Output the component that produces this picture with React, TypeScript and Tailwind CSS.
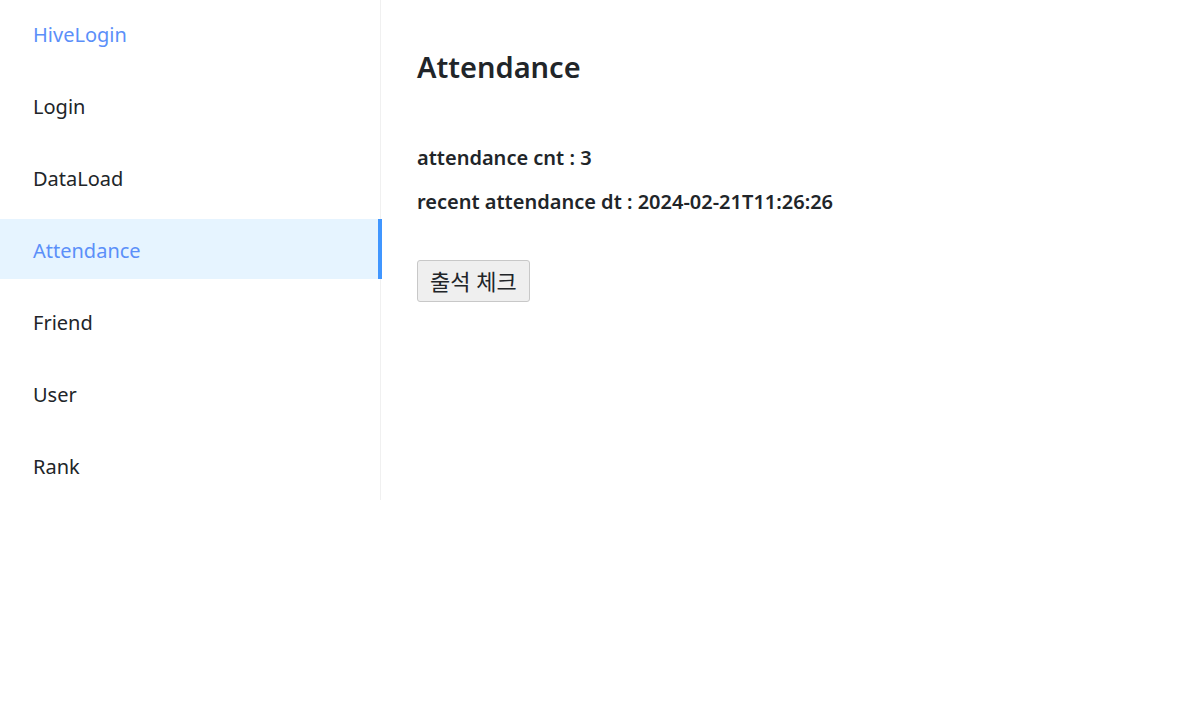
import { useState } from "react";

const menuItems = ["HiveLogin", "Login", "DataLoad", "Attendance", "Friend", "User", "Rank"];

const App = () => {
  const [active, setActive] = useState("Attendance");
  const [cnt, setCnt] = useState(3);

  return (
    <div className="flex min-h-[716px] bg-white text-[#212529]" style={{ fontFamily: '"Noto Sans", "Noto Sans CJK KR", sans-serif' }}>
      <div className="w-[381px] h-[500px] border-r border-[#f0f0f0] flex flex-col gap-3 pt-[3px] pb-[5px] shrink-0">
        {menuItems.map((item) => (
          <div
            key={item}
            onClick={() => setActive(item)}
            className={`relative h-[60px] flex items-center pl-[33px] pt-1 text-[20px] cursor-pointer ${
              item === active ? "bg-[#e6f4ff] text-[#5b8ff9]" : item === "HiveLogin" ? "text-[#5b8ff9]" : "text-[#212529]"
            }`}
          >
            {item}
            {item === active && <span className="absolute right-[-2px] top-0 h-full w-[4px] bg-[#4096ff]"></span>}
          </div>
        ))}
      </div>

      <div className="pl-9 pt-[44px]">
        <h1 className="text-[29px] font-semibold leading-[46px]">Attendance</h1>
        <div className="mt-[55px] text-[20px] font-semibold leading-[26px]">
          <p>attendance cnt : {cnt}</p>
          <p className="mt-[18px]">recent attendance dt : 2024-02-21T11:26:26</p>
        </div>
        <button
          type="button"
          onClick={() => setCnt(cnt + 1)}
          className="mt-[45px] h-[42px] px-3 bg-[#efefef] border border-[#c8c8c8] rounded-[3px] text-[22px] text-[#212529]"
        >
          출석 체크
        </button>
      </div>
    </div>
  );
};

export default App;
